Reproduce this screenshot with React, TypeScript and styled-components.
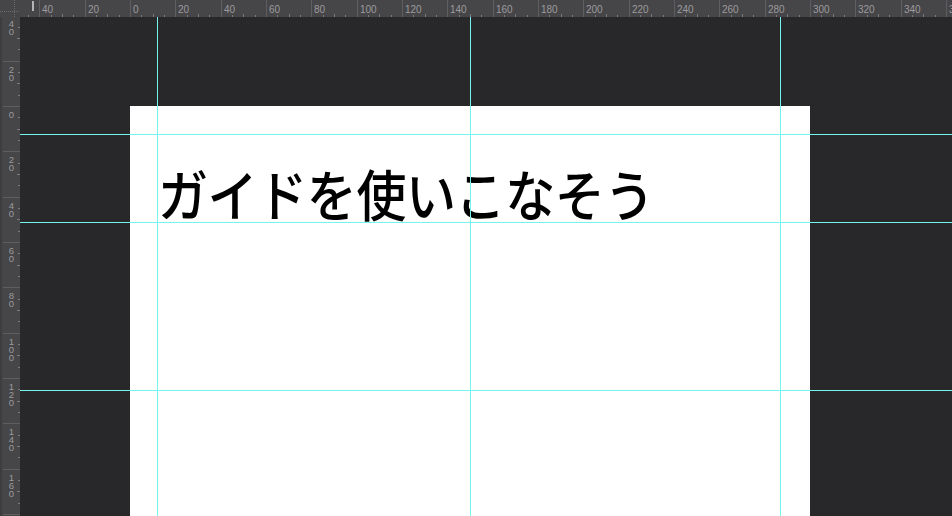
import React from 'react';
import styled, { createGlobalStyle } from 'styled-components';

const SCALE = 680 / 300; // px per unit, zoom 226.67%
const ORIGIN_X = 110; // doc 0 inside the top ruler
const ORIGIN_Y = 89; // doc 0 inside the left ruler

const GlobalStyle = createGlobalStyle`
  html, body {
    margin: 0;
    padding: 0;
    background: #28272a;
    overflow: hidden;
  }
`;

const TopRuler: React.FC = () => {
  const marks = [];
  for (let u = -60; u <= 380; u += 5) {
    const x = Math.round(ORIGIN_X + u * SCALE) + 0.5;
    if (u % 20 === 0) {
      marks.push(<line key={u} x1={x} x2={x} y1={0} y2={17} stroke="#5e5d60" />);
      marks.push(
        <text key={`t${u}`} x={x + 2.5} y={13} fill="#9c9b9e" fontSize="10" fontFamily="Liberation Sans, sans-serif">
          {Math.abs(u)}
        </text>,
      );
    } else {
      const h = u % 10 === 0 ? 3 : 2;
      marks.push(<line key={u} x1={x} x2={x} y1={17 - h} y2={17} stroke="#7a797c" />);
    }
  }
  return (
    <RulerSvg width={932} height={17}>
      {marks}
      <rect x={12} y={1} width={2} height={10} fill="#b4b3b6" />
    </RulerSvg>
  );
};

const LeftRuler: React.FC = () => {
  const marks = [];
  for (let u = -40; u <= 200; u += 5) {
    const y = Math.round(ORIGIN_Y + u * SCALE) + 0.5;
    if (u % 20 === 0) {
      marks.push(<line key={u} x1={3} x2={20} y1={y} y2={y} stroke="#5e5d60" />);
      String(Math.abs(u))
        .split('')
        .forEach((d, i) =>
          marks.push(
            <text
              key={`t${u}-${i}`}
              x={11.5}
              y={y + 11.5 + i * 8}
              fill="#9c9b9e"
              fontSize="9.5"
              textAnchor="middle"
              fontFamily="Liberation Sans, sans-serif"
            >
              {d}
            </text>,
          ),
        );
    } else {
      const w = u % 10 === 0 ? 3 : 2;
      marks.push(<line key={u} x1={20 - w} x2={20} y1={y} y2={y} stroke="#7a797c" />);
    }
  }
  return (
    <RulerSvg width={20} height={499}>
      <rect x={0} y={0} width={2} height={499} fill="#3d3c3f" />
      {marks}
    </RulerSvg>
  );
};

const verticalGuides = [137, 450, 760];
const horizontalGuides = [117, 205, 373];

const App: React.FC = () => {
  return (
    <>
      <GlobalStyle />
      <Workspace>
        <Corner>
          <svg width={20} height={17}>
            <line x1={14.5} x2={14.5} y1={0} y2={17} stroke="#6a696c" strokeDasharray="1 1" />
            <line x1={0} x2={20} y1={11.5} y2={11.5} stroke="#6a696c" strokeDasharray="1 1" />
          </svg>
        </Corner>
        <HorizontalRuler>
          <TopRuler />
        </HorizontalRuler>
        <VerticalRuler>
          <LeftRuler />
        </VerticalRuler>
        <Canvas>
          <Document>
            <Heading>ガイドを使いこなそう</Heading>
          </Document>
          {verticalGuides.map((x) => (
            <Guide key={`v${x}`} $vertical style={{ left: x }} />
          ))}
          {horizontalGuides.map((y) => (
            <Guide key={`h${y}`} style={{ top: y }} />
          ))}
        </Canvas>
      </Workspace>
    </>
  );
};

const Workspace = styled.div`
  display: grid;
  grid-template-columns: 20px 1fr;
  grid-template-rows: 17px 1fr;
  width: 952px;
  height: 516px;
  background: #28272a;
  overflow: hidden;
`;

const Corner = styled.div`
  background: #464548;
  svg {
    display: block;
  }
`;

const HorizontalRuler = styled.div`
  background: #464548;
  overflow: hidden;
`;

const VerticalRuler = styled.div`
  background: #464548;
  overflow: hidden;
`;

const RulerSvg = styled.svg`
  display: block;
`;

const Canvas = styled.div`
  position: relative;
  overflow: hidden;
  background: #28272a;
`;

const Document = styled.div`
  margin: 89px 0 0 110px;
  width: 680px;
  height: 600px;
  background: #ffffff;
  padding: 63px 0 0 28px;
  box-sizing: border-box;
`;

const Heading = styled.h1`
  display: inline-block;
  margin: 0;
  font-family: 'Noto Sans CJK JP', sans-serif;
  font-size: 50px;
  font-weight: 500;
  line-height: 1;
  letter-spacing: -0.4px;
  color: #000000;
  transform: scaleY(1.1);
  transform-origin: 50% 90%;
`;

const Guide = styled.div<{ $vertical?: boolean }>`
  position: absolute;
  background: #74f4ec;
  ${(p) =>
    p.$vertical
      ? `top: 0; bottom: 0; width: 1px;`
      : `left: 0; right: 0; height: 1px;`}
`;

export default App;
